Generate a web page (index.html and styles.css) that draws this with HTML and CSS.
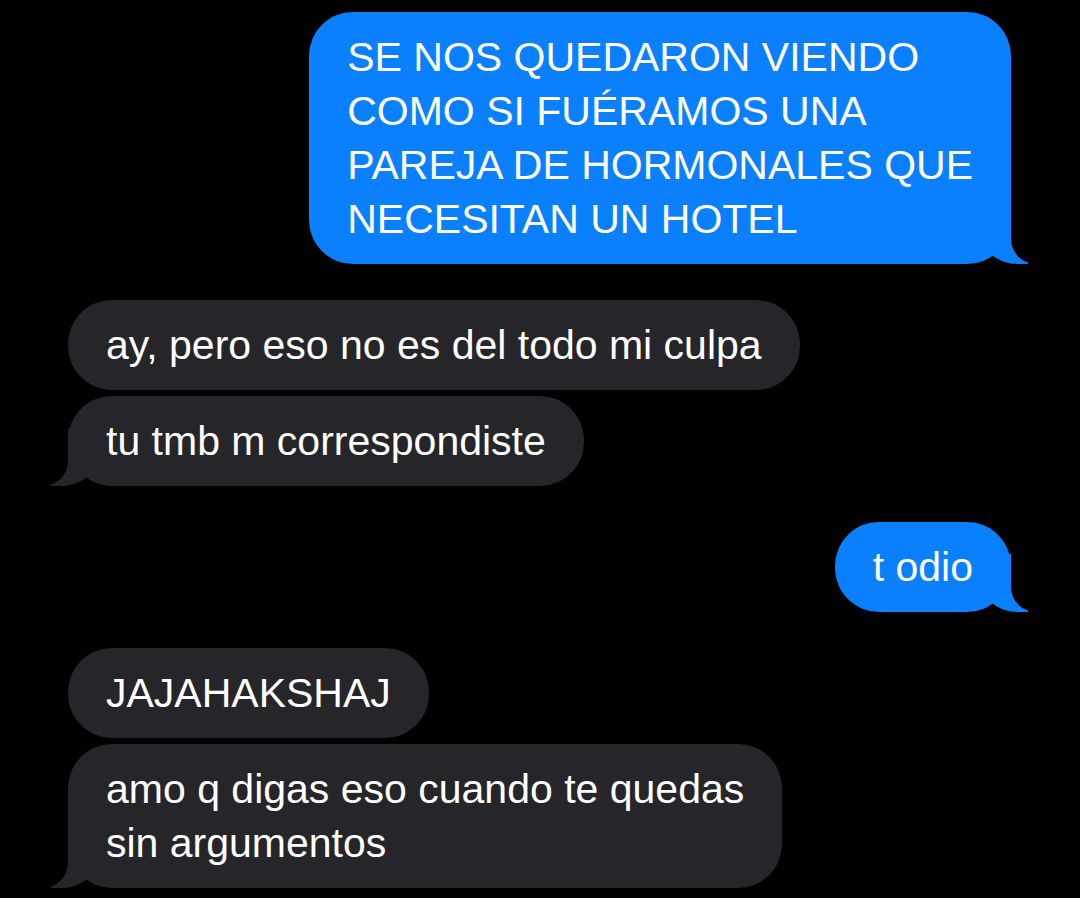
FILE: index.html
```html
<!DOCTYPE html>
<html lang="es">
<head>
    <meta charset="UTF-8">
    <meta name="viewport" content="width=device-width, initial-scale=1.0">
    <title>Mensajes</title>
    <link rel="stylesheet" href="styles.css">
</head>
<body>
    <main class="thread">
        <div class="group sent">
            <div class="bubble tail">SE NOS QUEDARON VIENDO<br>COMO SI FUÉRAMOS UNA<br>PAREJA DE HORMONALES QUE<br>NECESITAN UN HOTEL</div>
        </div>

        <div class="group received">
            <div class="bubble">ay, pero eso no es del todo mi culpa</div>
            <div class="bubble tail">tu tmb m correspondiste</div>
        </div>

        <div class="group sent">
            <div class="bubble tail">t odio</div>
        </div>

        <div class="group received">
            <div class="bubble">JAJAHAKSHAJ</div>
            <div class="bubble tail">amo q digas eso cuando te quedas<br>sin argumentos</div>
        </div>
    </main>
</body>
</html>
```

FILE: styles.css
```css
* {
    margin: 0;
    padding: 0;
    box-sizing: border-box;
}

body {
    font-family: 'Liberation Sans', Arial, sans-serif;
    background: #000;
    color: #fff;
}

.thread {
    display: flex;
    flex-direction: column;
    gap: 36px;
    padding: 12px 69px 10px 68px;
}

.group {
    display: flex;
    flex-direction: column;
    gap: 6px;
}

.sent {
    align-items: flex-end;
}

.received {
    align-items: flex-start;
}

.bubble {
    position: relative;
    font-size: 41px;
    line-height: 54px;
    padding: 18px 38px;
    border-radius: 44px;
    white-space: nowrap;
}

.sent .bubble {
    background: #0b80fe;
}

.received .bubble {
    background: #262529;
}

/* iMessage style tail: coloured blob, then a black blob cutting it */
.bubble.tail::before,
.bubble.tail::after {
    content: "";
    position: absolute;
    bottom: 0;
    height: 58px;
}

.sent .bubble.tail::before {
    right: -17px;
    width: 49px;
    background: #0b80fe;
    border-bottom-left-radius: 39px 34px;
}

.sent .bubble.tail::after {
    right: -64px;
    width: 64px;
    background: #000;
    border-bottom-left-radius: 25px;
}

.received .bubble.tail::before {
    left: -17px;
    width: 49px;
    background: #262529;
    border-bottom-right-radius: 39px 34px;
}

.received .bubble.tail::after {
    left: -64px;
    width: 64px;
    background: #000;
    border-bottom-right-radius: 25px;
}
```
